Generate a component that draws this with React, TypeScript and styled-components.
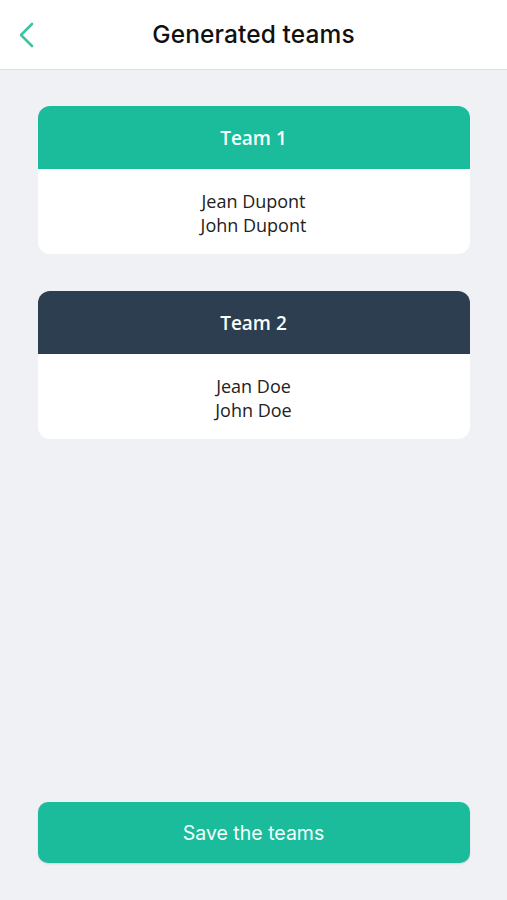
import React from "react";
import styled, { createGlobalStyle } from "styled-components";

const GlobalStyle = createGlobalStyle`
    html, body {
        margin: 0;
        padding: 0;
        background: #eff1f5;
    }
`;

const teams = [
    { name: "Team 1", color: "#1abc9c", members: ["Jean Dupont", "John Dupont"] },
    { name: "Team 2", color: "#2c3e50", members: ["Jean Doe", "John Doe"] },
];

const StyledPage = styled.div`
    display: flex;
    flex-direction: column;
    min-height: 100vh;
    background: #eff1f5;
`;

const StyledHeader = styled.header`
    position: relative;
    display: flex;
    align-items: center;
    justify-content: center;
    height: 70px;
    background: #ffffff;
    border-bottom: 1px solid #dcdee2;
    box-sizing: border-box;

    .back {
        position: absolute;
        top: 22px;
        left: 16px;
        width: 24px;
        height: 26px;
        padding: 0;
        border: none;
        background: none;
    }

    h1 {
        margin: 0 0 1px;
        font-family: Inter, "Liberation Sans", sans-serif;
        font-weight: 500;
        font-size: 24.5px;
        color: #111111;
        letter-spacing: 0.1px;
    }
`;

const StyledList = styled.main`
    display: flex;
    flex: 1;
    flex-direction: column;
    gap: 37px;
    width: 432px;
    margin: 0 auto;
    padding-top: 36px;
`;

const StyledCard = styled.section`
    overflow: hidden;
    border-radius: 12px;
    background: #ffffff;
    font-family: "Open Sans", "Liberation Sans", sans-serif;
    text-align: center;
`;

const StyledCardHead = styled.div<{ $color: string }>`
    height: 63px;
    line-height: 64px;
    background: ${(p) => p.$color};
    color: #f8fffd;
    font-weight: 600;
    font-size: 19px;
`;

const StyledMembers = styled.div`
    padding: 20px 0 17px;
    color: #222222;
    font-size: 18px;
    line-height: 24px;
`;

const StyledSave = styled.button`
    display: block;
    width: 432px;
    height: 61px;
    margin: 0 auto 37px;
    border: none;
    border-radius: 10px;
    background: #1abc9c;
    box-shadow: 0 1px 2px rgba(0, 0, 0, 0.12);
    color: #f4fffc;
    font-family: Inter, "Liberation Sans", sans-serif;
    font-weight: 400;
    font-size: 19.5px;
`;

function App() {
    return (
        <StyledPage>
            <GlobalStyle />
            <StyledHeader>
                <button className="back" aria-label="Back">
                    <svg width="24" height="26" viewBox="0 0 24 26">
                        <path
                            d="M16 2 L5 13 L16 24"
                            fill="none"
                            stroke="#3ec3a2"
                            strokeWidth="2.6"
                            strokeLinecap="round"
                            strokeLinejoin="round"
                        />
                    </svg>
                </button>
                <h1>Generated teams</h1>
            </StyledHeader>
            <StyledList>
                {teams.map((team) => (
                    <StyledCard key={team.name}>
                        <StyledCardHead $color={team.color}>{team.name}</StyledCardHead>
                        <StyledMembers>
                            {team.members.map((m) => (
                                <div key={m}>{m}</div>
                            ))}
                        </StyledMembers>
                    </StyledCard>
                ))}
            </StyledList>
            <StyledSave>Save the teams</StyledSave>
        </StyledPage>
    );
}

export default App;
